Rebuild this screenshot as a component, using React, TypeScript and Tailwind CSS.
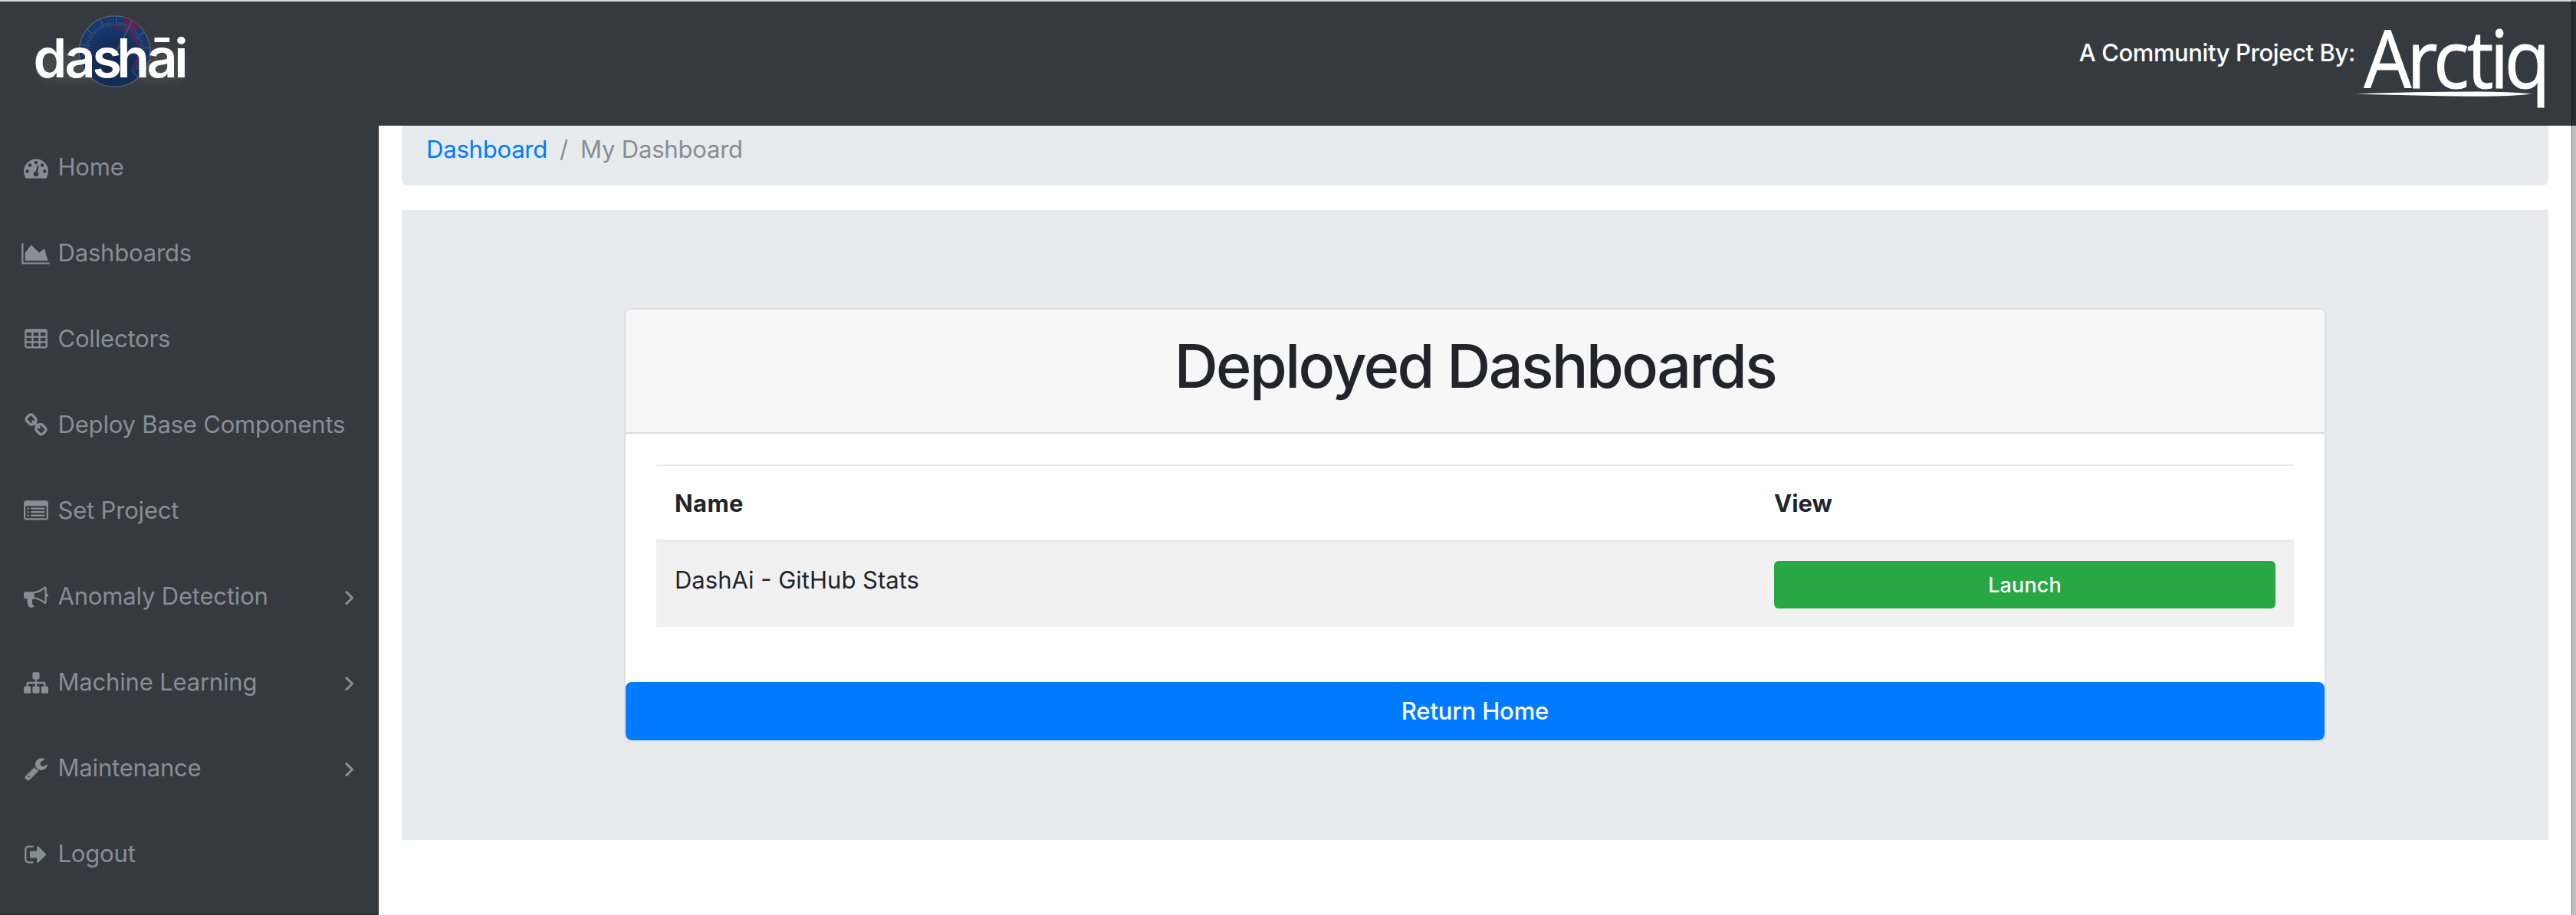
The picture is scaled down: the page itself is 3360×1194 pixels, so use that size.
const ICONS = {
  dashboard:
    "M384 1152q0-53-37.5-90.5t-90.5-37.5-90.5 37.5-37.5 90.5 37.5 90.5 90.5 37.5 90.5-37.5 37.5-90.5zm192-448q0-53-37.5-90.5t-90.5-37.5-90.5 37.5-37.5 90.5 37.5 90.5 90.5 37.5 90.5-37.5 37.5-90.5zm428 481l101-382q6-26-7.5-48.5t-38.5-29.5-48 6.5-30 39.5l-101 382q-60 5-107 43.5t-63 98.5q-20 77 20 146t117 89 146-20 89-117q16-60-6-117t-72-91zm660-33q0-53-37.5-90.5t-90.5-37.5-90.5 37.5-37.5 90.5 37.5 90.5 90.5 37.5 90.5-37.5 37.5-90.5zm-640-640q0-53-37.5-90.5t-90.5-37.5-90.5 37.5-37.5 90.5 37.5 90.5 90.5 37.5 90.5-37.5 37.5-90.5zm448 192q0-53-37.5-90.5t-90.5-37.5-90.5 37.5-37.5 90.5 37.5 90.5 90.5 37.5 90.5-37.5 37.5-90.5zm320 448q0 261-141 483-19 29-54 29h-1402q-35 0-54-29-141-221-141-483 0-182 71-348t191-286 286-191 348-71 348 71 286 191 191 286 71 348z",
  area: "M2048 1536v128h-2048v-1536h128v1408h1920zm-384-1024l256 896h-1664v-576l448-576 576 576z",
  table:
    "M576 1376v-192q0-14-9-23t-23-9h-320q-14 0-23 9t-9 23v192q0 14 9 23t23 9h320q14 0 23-9t9-23zm0-384v-192q0-14-9-23t-23-9h-320q-14 0-23 9t-9 23v192q0 14 9 23t23 9h320q14 0 23-9t9-23zm512 384v-192q0-14-9-23t-23-9h-320q-14 0-23 9t-9 23v192q0 14 9 23t23 9h320q14 0 23-9t9-23zm-512-768v-192q0-14-9-23t-23-9h-320q-14 0-23 9t-9 23v192q0 14 9 23t23 9h320q14 0 23-9t9-23zm512 384v-192q0-14-9-23t-23-9h-320q-14 0-23 9t-9 23v192q0 14 9 23t23 9h320q14 0 23-9t9-23zm512 384v-192q0-14-9-23t-23-9h-320q-14 0-23 9t-9 23v192q0 14 9 23t23 9h320q14 0 23-9t9-23zm-512-768v-192q0-14-9-23t-23-9h-320q-14 0-23 9t-9 23v192q0 14 9 23t23 9h320q14 0 23-9t9-23zm512 384v-192q0-14-9-23t-23-9h-320q-14 0-23 9t-9 23v192q0 14 9 23t23 9h320q14 0 23-9t9-23zm0-384v-192q0-14-9-23t-23-9h-320q-14 0-23 9t-9 23v192q0 14 9 23t23 9h320q14 0 23-9t9-23zm128-320v1088q0 66-47 113t-113 47h-1344q-66 0-113-47t-47-113v-1088q0-66 47-113t113-47h1344q66 0 113 47t47 113z",
  chain:
    "M1520 1216q0-40-28-68l-208-208q-28-28-68-28-42 0-72 32 3 3 19 18.5t21.5 21.5 15 19 13 25.5 3.5 27.5q0 40-28 68t-68 28q-15 0-27.5-3.5t-25.5-13-19-15-21.5-21.5-18.5-19q-33 31-33 73 0 40 28 68l206 207q27 27 68 27 40 0 68-26l147-146q28-28 28-67zm-703-705q0-40-28-68l-206-207q-28-28-68-28-39 0-68 27l-147 146q-28 28-28 67 0 40 28 68l208 208q27 27 68 27 42 0 72-31-3-3-19-18.5t-21.5-21.5-15-19-13-25.5-3.5-27.5q0-40 28-68t68-28q15 0 27.5 3.5t25.5 13 19 15 21.5 21.5 18.5 19q33-31 33-73zm895 705q0 120-85 203l-147 146q-83 83-203 83-121 0-204-85l-206-207q-83-83-83-203 0-123 88-209l-88-88q-86 88-208 88-120 0-204-84l-208-208q-84-84-84-204t85-203l147-146q83-83 203-83 121 0 204 85l206 207q83 83 83 203 0 123-88 209l88 88q86-88 208-88 120 0 204 84l208 208q84 84 84 204z",
  list: "M384 1184v64q0 13-9.5 22.5t-22.5 9.5h-64q-13 0-22.5-9.5t-9.5-22.5v-64q0-13 9.5-22.5t22.5-9.5h64q13 0 22.5 9.5t9.5 22.5zm0-256v64q0 13-9.5 22.5t-22.5 9.5h-64q-13 0-22.5-9.5t-9.5-22.5v-64q0-13 9.5-22.5t22.5-9.5h64q13 0 22.5 9.5t9.5 22.5zm0-256v64q0 13-9.5 22.5t-22.5 9.5h-64q-13 0-22.5-9.5t-9.5-22.5v-64q0-13 9.5-22.5t22.5-9.5h64q13 0 22.5 9.5t9.5 22.5zm1152 512v64q0 13-9.5 22.5t-22.5 9.5h-960q-13 0-22.5-9.5t-9.5-22.5v-64q0-13 9.5-22.5t22.5-9.5h960q13 0 22.5 9.5t9.5 22.5zm0-256v64q0 13-9.5 22.5t-22.5 9.5h-960q-13 0-22.5-9.5t-9.5-22.5v-64q0-13 9.5-22.5t22.5-9.5h960q13 0 22.5 9.5t9.5 22.5zm0-256v64q0 13-9.5 22.5t-22.5 9.5h-960q-13 0-22.5-9.5t-9.5-22.5v-64q0-13 9.5-22.5t22.5-9.5h960q13 0 22.5 9.5t9.5 22.5zm128 704v-832q0-13-9.5-22.5t-22.5-9.5h-1472q-13 0-22.5 9.5t-9.5 22.5v832q0 13 9.5 22.5t22.5 9.5h1472q13 0 22.5-9.5t9.5-22.5zm128-1088v1088q0 66-47 113t-113 47h-1472q-66 0-113-47t-47-113v-1088q0-66 47-113t113-47h1472q66 0 113 47t47 113z",
  bullhorn:
    "M1664 640q53 0 90.5 37.5t37.5 90.5-37.5 90.5-90.5 37.5v384q0 52-38 90t-90 38q-417-347-812-380-58 19-91 66t-31 100.5 40 92.5q-20 33-23 65.5t6 58 33.5 55 48 50 61.5 50.5q-29 58-111.5 83t-168.5 11.5-132-55.5q-7-23-29.5-87.5t-32-94.5-23-89-15-101 3.5-98.5 22-110.5h-122q-66 0-113-47t-47-113v-192q0-66 47-113t113-47h480q435 0 896-384 52 0 90 38t38 90v384zm-128 604v-954q-394 302-768 343v270q377 42 768 341z",
  sitemap:
    "M1792 1248v320q0 40-28 68t-68 28h-320q-40 0-68-28t-28-68v-320q0-40 28-68t68-28h96v-192h-512v192h96q40 0 68 28t28 68v320q0 40-28 68t-68 28h-320q-40 0-68-28t-28-68v-320q0-40 28-68t68-28h96v-192h-512v192h96q40 0 68 28t28 68v320q0 40-28 68t-68 28h-320q-40 0-68-28t-28-68v-320q0-40 28-68t68-28h96v-192q0-52 38-90t90-38h512v-192h-96q-40 0-68-28t-28-68v-320q0-40 28-68t68-28h320q40 0 68 28t28 68v320q0 40-28 68t-68 28h-96v192h512q52 0 90 38t38 90v192h96q40 0 68 28t28 68z",
  wrench:
    "M448 1472q0-26-19-45t-45-19-45 19-19 45 19 45 45 19 45-19 19-45zm644-420l-682 682q-37 37-90 37-52 0-91-37l-106-108q-38-36-38-90 0-53 38-91l681-681q39 98 114.5 173.5t173.5 114.5zm634-435q0 39-23 106-47 134-164.5 217.5t-258.5 83.5q-185 0-316.5-131.5t-131.5-316.5 131.5-316.5 316.5-131.5q58 0 121.5 16.5t107.5 46.5q16 11 16 28t-16 28l-293 169v224l193 107q5-3 79-48.5t135.5-81 70.5-35.5q15 0 23.5 10t8.5 25z",
  signOut:
    "M704 1440q0 4 1 20t.5 26.5-3 23.5-10 19.5-20.5 6.5h-320q-119 0-203.5-84.5t-84.5-203.5v-704q0-119 84.5-203.5t203.5-84.5h320q13 0 22.5 9.5t9.5 22.5q0 4 1 20t.5 26.5-3 23.5-10 19.5-20.5 6.5h-320q-66 0-113 47t-47 113v704q0 66 47 113t113 47h312l11.5 1 11.5 3 8 5.5 7 9 2 13.5zm928-544q0 26-19 45l-544 544q-19 19-45 19t-45-19-19-45v-288h-448q-26 0-45-19t-19-45v-384q0-26 19-45t45-19h448v-288q0-26 19-45t45-19 45 19l544 544q19 19 19 45z",
  angleRight:
    "M1171 960q0 13-10 23l-466 466q-10 10-23 10t-23-10l-50-50q-10-10-10-23t10-23l393-393-393-393q-10-10-10-23t10-23l50-50q10-10 23-10t23 10l466 466q10 10 10 23z",
};

type IconName = keyof typeof ICONS;

function Icon({ name }: { name: IconName }) {
  const wide = name === "area";
  return (
    <svg
      viewBox={wide ? "0 0 2048 1792" : "0 0 1792 1792"}
      className={wide ? "h-8 w-[37px] shrink-0" : "size-8 shrink-0"}
      fill="currentColor"
      fillRule="evenodd"
      stroke="currentColor"
      strokeWidth={name === "angleRight" ? 50 : 0}
    >
      <path d={ICONS[name]} />
    </svg>
  );
}

const NAV: { icon: IconName; label: string; more?: boolean }[] = [
  { icon: "dashboard", label: "Home" },
  { icon: "area", label: "Dashboards" },
  { icon: "table", label: "Collectors" },
  { icon: "chain", label: "Deploy Base Components" },
  { icon: "list", label: "Set Project" },
  { icon: "bullhorn", label: "Anomaly Detection", more: true },
  { icon: "sitemap", label: "Machine Learning", more: true },
  { icon: "wrench", label: "Maintenance", more: true },
  { icon: "signOut", label: "Logout" },
];

const TICKS = Array.from({ length: 46 }, (_, i) => -105 + i * 5.4);

function DashaiLogo() {
  return (
    <svg viewBox="0 0 260 130" className="h-[130px] w-[260px] shrink-0">
      <defs>
        <radialGradient id="dial" cx="0.5" cy="0.72" r="0.6">
          <stop offset="0" stopColor="#12264a" />
          <stop offset="0.45" stopColor="#142c58" />
          <stop offset="1" stopColor="#17386f" />
        </radialGradient>
        <filter id="glow" x="-20%" y="-40%" width="140%" height="180%">
          <feGaussianBlur stdDeviation="6" />
        </filter>
      </defs>
      <rect x="50" y="66" width="194" height="40" rx="14" fill="#5f5f56" opacity="0.4" filter="url(#glow)" />
      <circle cx="149.5" cy="67" r="46.2" fill="url(#dial)" stroke="#5d6570" strokeWidth="1.2" />
      <path d="M161.8 22.5A46 46 0 0 1 182.5 34.5L175.500 41.5A36 36 0 0 0 160.5 32Z" fill="#5f2150" />
      {TICKS.map((a, i) => {
        const major = i % 5 === 0;
        return (
          <line
            key={a}
            x1="149.5"
            x2="149.5"
            y1={major ? 21.5 : 28}
            y2={major ? 34 : 33.5}
            stroke="#4c5f86"
            strokeWidth={major ? 1 : 0.9}
            transform={`rotate(${a} 149.5 67)`}
          />
        );
      })}
      <path d="M144.5 36A31.500 31.500 0 0 1 172 89" fill="none" stroke="#5a2448" strokeWidth="2.6" />
      <path d="M170 32L151 69" stroke="#4d5f80" strokeWidth="1.4" />
      <text x="43.5 84.5 120.5 152.3 191.5 227.2" y="101" className="font-['Inter'] text-[70px] font-semibold" fill="#fff">
        dashāi
      </text>
    </svg>
  );
}

function ArctiqLogo() {
  return (
    <svg viewBox="0 0 260 164" className="h-[164px] w-[260px] shrink-0">
      <g transform="scale(.93 1)">
        <text
          x="16.600 77 114 161 193.4 213.8"
          y="115"
          className="font-['Open_Sans'] text-[105px]"
          fill="#fff"
          stroke="#fff"
          strokeWidth="1"
        >
          Arctiq
        </text>
      </g>
      <path d="M4 122.500Q80 119.500 164 119.500Q204 119.500 235 122.500Q204 125.800 172 125.800Q100 125.500 4 122.500Z" fill="#fff" />
    </svg>
  );
}

function Header() {
  return (
    <header className="flex h-[164px] justify-between border-t-2 border-[#d9dbdd] bg-[#353a40]">
      <div className="-mt-0.5">
        <DashaiLogo />
      </div>
      <div className="-mt-0.5 mr-[32px] flex">
        <span className="pt-[49px] text-[31px] leading-[40px] font-medium tracking-[-0.4px] whitespace-nowrap text-white">
          A Community Project By:
        </span>
        <div className="-ml-[4px]">
          <ArctiqLogo />
        </div>
      </div>
    </header>
  );
}

function Sidebar() {
  return (
    <nav className="w-[494px] shrink-0 border-b-2 border-[#303339] bg-[#353a40] text-[#868e96]">
      {NAV.map((item) => (
        <a key={item.label} className="flex h-28 items-center pr-[22px] pb-[3px] pl-[26px]">
          <span className="flex w-[41px] shrink-0 justify-center">
            <Icon name={item.icon} />
          </span>
          <span className="ml-[8.5px] grow text-[31px] tracking-[-0.18px] whitespace-nowrap">{item.label}</span>
          {item.more && <Icon name="angleRight" />}
        </a>
      ))}
    </nav>
  );
}

function DashboardCard() {
  return (
    <section className="rounded-lg border-2 border-[#dfdfe0] bg-white">
      <h1 className="h-[162px] rounded-t-md border-b-2 border-[#d9d9d9] bg-[#f7f7f7] pt-[25px] text-center text-[79px] leading-[96px] font-medium tracking-[-2.55px]">
        Deployed Dashboards
      </h1>
      <div className="px-10 pt-10 pb-[72px]">
        <div className="grid h-[102px] grid-cols-[1434px_1fr] border-t-2 border-b-4 border-[#e8ebee] pt-[25px] text-[31px] leading-[48px] font-bold">
          <div className="px-6 tracking-[0.4px]">Name</div>
          <div className="px-6">View</div>
        </div>
        <div className="grid h-[110px] grid-cols-[1434px_1fr] bg-[#f1f1f1] pt-6">
          <div className="px-6 pt-px text-[31px] leading-[48px]">DashAi - GitHub Stats</div>
          <div className="px-6">
            <button className="block h-[62px] w-full rounded-md bg-[#28a745] pt-0.5 text-[27px] font-medium tracking-[0.1px] text-white">
              Launch
            </button>
          </div>
        </div>
      </div>
      <button className="block h-[76px] w-full rounded-lg bg-[#007bff] pt-px text-[31px] font-medium tracking-[-0.15px] text-white">
        Return Home
      </button>
    </section>
  );
}

export default function App() {
  return (
    <div className="relative flex h-[1194px] w-[3360px] flex-col overflow-hidden bg-white font-['Inter',sans-serif] text-[#212529]">
      <Header />
      <div className="flex min-h-0 grow">
        <Sidebar />
        <main className="grow pr-9 pl-[30px]">
          <div className="flex h-[78px] gap-4 rounded-b-lg bg-[#e8ebee] pt-[7px] pl-8 text-[31px] leading-[48px] tracking-[-0.2px] text-[#868e96]">
            <a className="text-[#007bff]">Dashboard</a>
            <span>/</span>
            <span>My Dashboard</span>
          </div>
          <div className="mt-8 h-[822px] bg-[#e8ebee] px-[290px] pt-32">
            <DashboardCard />
          </div>
        </main>
      </div>
      <div className="absolute inset-y-0 right-0 w-1.5 border-l border-black/40 bg-black/25" />
    </div>
  );
}
